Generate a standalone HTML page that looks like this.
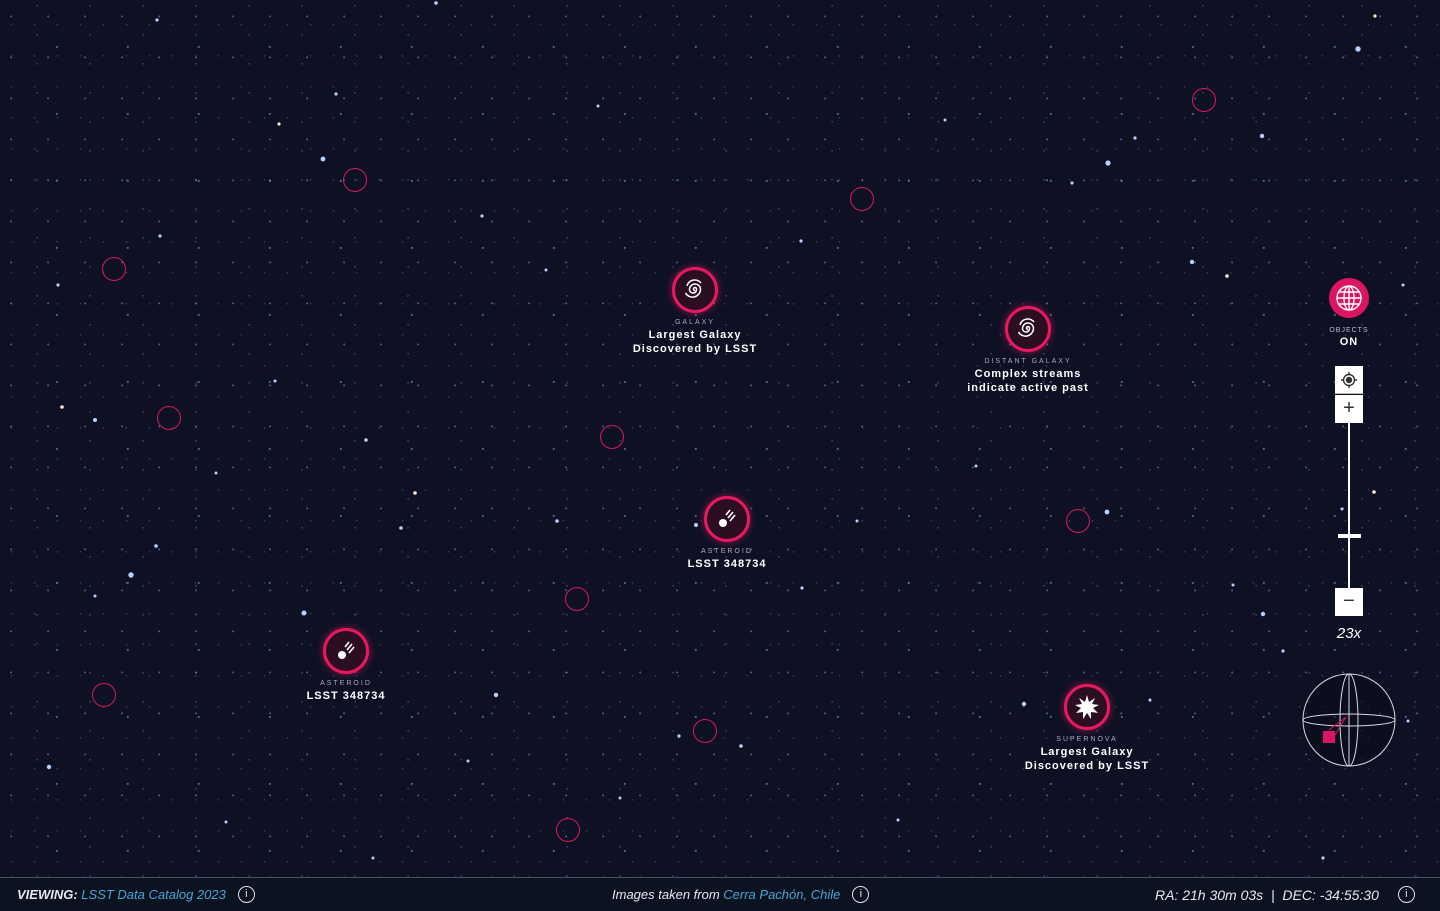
<!DOCTYPE html>
<html><head><meta charset="utf-8"><style>
*{margin:0;padding:0;box-sizing:border-box}
body{width:1440px;height:911px;overflow:hidden;background:#0e1124;font-family:"Liberation Sans",sans-serif;color:#fff;position:relative}
.sky{position:absolute;inset:0;
background:
radial-gradient(circle at 30% 40%,rgba(170,190,255,.45) 0 .7px,transparent 1.2px) 0 0/37px 41px,
radial-gradient(circle at 70% 20%,rgba(170,190,255,.3) 0 .6px,transparent 1.1px) 0 0/53px 29px,
radial-gradient(circle at 50% 80%,rgba(200,200,255,.22) 0 .6px,transparent 1.1px) 0 0/23px 31px,
radial-gradient(circle at 80% 70%,rgba(160,190,255,.5) 0 .8px,transparent 1.3px) 0 0/71px 67px,
#0e1124}
.big{position:absolute;width:46px;height:46px;margin:-23px 0 0 -23px;border-radius:50%;border:3px solid #e8195f;background:#2b0e22;box-shadow:0 0 8px rgba(232,25,95,.6)}
.big svg{position:absolute;left:7px;top:7px}
.sm{position:absolute;width:24px;height:24px;margin:-12px 0 0 -12px;border-radius:50%;border:1.6px solid #d81a5a}
.lab{position:absolute;width:200px;margin-left:-100px;text-align:center;font-weight:bold;font-size:11px;letter-spacing:1px;line-height:14px}
.lab .t{font-size:7px;letter-spacing:2px;color:#aab;font-weight:normal;line-height:10px}
.foot{position:absolute;left:0;top:877px;width:1440px;height:34px;background:#0b1320;border-top:1px solid #4a5160;font-style:italic;font-size:13px;color:#e6e8ee}
.foot span.b{color:#4aa3d6}
.foot>div{position:absolute;top:0;height:33px;display:flex;align-items:center}
.info{display:inline-block;width:17px;height:17px;border:1px solid #dfe3ea;border-radius:50%;font-style:normal;font-size:11px;text-align:center;line-height:15px;margin-left:12px}
.box{position:absolute;left:1335px;width:28px;background:#fff;color:#333;text-align:center}
</style></head><body>
<div class="sky"></div>
<svg width="1440" height="911" style="position:absolute;left:0;top:0">
<g fill="#b8d0ff">
<circle cx="323" cy="159" r="2.4"/><circle cx="1358" cy="49" r="2.7"/><circle cx="1108" cy="163" r="2.6"/><circle cx="1262" cy="136" r="2.2"/><circle cx="131" cy="575" r="2.7"/><circle cx="304" cy="613" r="2.5"/><circle cx="1263" cy="614" r="2.2"/><circle cx="1107" cy="512" r="2.4"/><circle cx="49" cy="767" r="2.2"/><circle cx="1192" cy="262" r="2.2"/><circle cx="156" cy="546" r="1.8"/><circle cx="95" cy="420" r="2"/><circle cx="401" cy="528" r="1.8"/><circle cx="496" cy="695" r="2.2"/><circle cx="741" cy="746" r="1.8"/><circle cx="1024" cy="704" r="2.2"/><circle cx="1135" cy="138" r="1.6"/><circle cx="801" cy="241" r="1.6"/><circle cx="482" cy="216" r="1.6"/><circle cx="160" cy="236" r="1.6"/><circle cx="336" cy="94" r="1.6"/><circle cx="436" cy="3" r="1.8"/><circle cx="157" cy="20" r="1.6"/><circle cx="58" cy="285" r="1.6"/><circle cx="366" cy="440" r="1.8"/><circle cx="546" cy="270" r="1.5"/><circle cx="857" cy="521" r="1.5"/><circle cx="802" cy="588" r="1.6"/><circle cx="1283" cy="651" r="1.6"/><circle cx="1323" cy="858" r="1.6"/><circle cx="1072" cy="183" r="1.6"/><circle cx="976" cy="466" r="1.5"/><circle cx="679" cy="736" r="1.6"/><circle cx="598" cy="106" r="1.5"/><circle cx="945" cy="120" r="1.5"/><circle cx="1233" cy="585" r="1.5"/><circle cx="226" cy="822" r="1.5"/><circle cx="373" cy="858" r="1.5"/><circle cx="898" cy="820" r="1.5"/><circle cx="1150" cy="700" r="1.5"/><circle cx="216" cy="473" r="1.5"/><circle cx="275" cy="381" r="1.5"/><circle cx="557" cy="521" r="1.8"/><circle cx="1342" cy="509" r="1.5"/><circle cx="1403" cy="285" r="1.5"/><circle cx="696" cy="525" r="2"/><circle cx="95" cy="596" r="1.5"/><circle cx="1408" cy="721" r="1.5"/><circle cx="620" cy="798" r="1.5"/><circle cx="468" cy="761" r="1.5"/>
</g>
<g fill="#ffe8c8"><circle cx="1227" cy="276" r="1.8"/><circle cx="415" cy="493" r="1.8"/><circle cx="62" cy="407" r="1.8"/><circle cx="279" cy="124" r="1.6"/><circle cx="1374" cy="492" r="1.8"/><circle cx="1375" cy="16" r="1.6"/></g>
</svg>

<div class="sm" style="left:355px;top:180px"></div><div class="sm" style="left:114px;top:269px"></div><div class="sm" style="left:169px;top:418px"></div><div class="sm" style="left:612px;top:437px"></div><div class="sm" style="left:862px;top:199px"></div><div class="sm" style="left:1204px;top:100px"></div><div class="sm" style="left:1078px;top:521px"></div><div class="sm" style="left:577px;top:599px"></div><div class="sm" style="left:104px;top:695px"></div><div class="sm" style="left:705px;top:731px"></div><div class="sm" style="left:568px;top:830px"></div>

<div class="big" style="left:695px;top:290px"><svg width="26" height="26" viewBox="0 0 26 26" fill="none" stroke="#fff" stroke-width="1.5"><path d="M13 13.5a1.5 1.5 0 1 1 1.5-1.5a3.5 3.5 0 1 1-7 1a5.5 5.5 0 1 1 11-1a8 8 0 0 1-15 4"/><path d="M5 9a8 8 0 0 1 14-3"/></svg></div>
<div class="lab" style="left:695px;top:318px"><div class="t">GALAXY</div>Largest Galaxy<br>Discovered by LSST</div>
<div class="big" style="left:1028px;top:329px"><svg width="26" height="26" viewBox="0 0 26 26" fill="none" stroke="#fff" stroke-width="1.5"><path d="M13 13.5a1.5 1.5 0 1 1 1.5-1.5a3.5 3.5 0 1 1-7 1a5.5 5.5 0 1 1 11-1a8 8 0 0 1-15 4"/><path d="M5 9a8 8 0 0 1 14-3"/></svg></div>
<div class="lab" style="left:1028px;top:357px"><div class="t">DISTANT GALAXY</div>Complex streams<br>indicate active past</div>
<div class="big" style="left:727px;top:519px"><svg width="26" height="26" viewBox="0 0 26 26" fill="none" stroke="#fff" stroke-width="1.6"><circle cx="9" cy="17" r="4" fill="#fff" stroke="none"/><path d="M14 12l5-6M16 15l5-6M12 9l4-5"/></svg></div>
<div class="lab" style="left:727px;top:547px"><div class="t">ASTEROID</div>LSST 348734</div>
<div class="big" style="left:346px;top:651px"><svg width="26" height="26" viewBox="0 0 26 26" fill="none" stroke="#fff" stroke-width="1.6"><circle cx="9" cy="17" r="4" fill="#fff" stroke="none"/><path d="M14 12l5-6M16 15l5-6M12 9l4-5"/></svg></div>
<div class="lab" style="left:346px;top:679px"><div class="t">ASTEROID</div>LSST 348734</div>
<div class="big" style="left:1087px;top:707px"><svg width="26" height="26" viewBox="0 0 26 26"><polygon fill="#fff" points="13,1 15,8 21,4 18,10 25,11 19,14 24,19 17,18 17,25 13,19 9,25 9,18 2,19 7,14 1,11 8,10 5,4 11,8"/></svg></div>
<div class="lab" style="left:1087px;top:735px"><div class="t">SUPERNOVA</div>Largest Galaxy<br>Discovered by LSST</div>

<div style="position:absolute;left:1329px;top:278px;width:40px;height:40px;border-radius:50%;background:#dc1563"><svg width="40" height="40" viewBox="0 0 40 40" fill="none" stroke="#fff" stroke-width="1.4"><circle cx="20" cy="20" r="12"/><ellipse cx="20" cy="20" rx="5" ry="12"/><path d="M8 20h24M10 14h20M10 26h20M20 8v24"/></svg></div>
<div style="position:absolute;left:1319px;top:327px;width:60px;text-align:center;font-size:7px;letter-spacing:1px;color:#bbc">OBJECTS</div>
<div style="position:absolute;left:1319px;top:336px;width:60px;text-align:center;font-size:11px;font-weight:bold;letter-spacing:1px">ON</div>
<div class="box" style="top:366px;height:28px;border-bottom:1px solid #bbb"><svg width="28" height="28" viewBox="0 0 28 28" fill="none" stroke="#333" stroke-width="1.4"><circle cx="14" cy="14" r="5.5"/><circle cx="14" cy="14" r="2.5" fill="#333"/><path d="M14 6v3M14 19v3M6 14h3M19 14h3"/></svg></div>
<div class="box" style="top:395px;height:28px;font-size:20px;line-height:27px">+</div>
<div style="position:absolute;left:1348px;top:423px;width:2px;height:165px;background:#fff"></div>
<div style="position:absolute;left:1338px;top:534px;width:23px;height:4px;background:#fff"></div>
<div class="box" style="top:588px;height:28px;font-size:20px;line-height:27px">−</div>
<div style="position:absolute;left:1319px;top:625px;width:60px;text-align:center;font-size:15px;font-style:italic">23x</div>
<svg style="position:absolute;left:1301px;top:673px" width="96" height="96" viewBox="0 0 96 96" fill="none" stroke="#d8dbe2" stroke-width="1"><circle cx="48" cy="47" r="46" fill="#0a0c18" fill-opacity=".5"/><ellipse cx="48" cy="47" rx="46" ry="6"/><ellipse cx="48" cy="47" rx="9" ry="46"/><path d="M48 1v92"/><path d="M28 57l17-13M34 62l11-18" stroke="#dc1563"/><rect x="22" y="58" width="12" height="12" fill="#dc1563" stroke="none"/></svg>

<div class="foot">
<div style="left:17px"><span><span style="font-weight:bold">VIEWING:</span> <span class="b">LSST Data Catalog 2023</span></span><span class="info">i</span></div>
<div style="left:612px"><span>Images taken from <span class="b">Cerra Pachón, Chile</span></span><span class="info">i</span></div>
<div style="left:1155px"><span style="font-size:14px">RA: 21h 30m 03s &nbsp;|&nbsp; DEC: -34:55:30</span><span class="info" style="margin-left:19px">i</span></div>
</div>
</body></html>
